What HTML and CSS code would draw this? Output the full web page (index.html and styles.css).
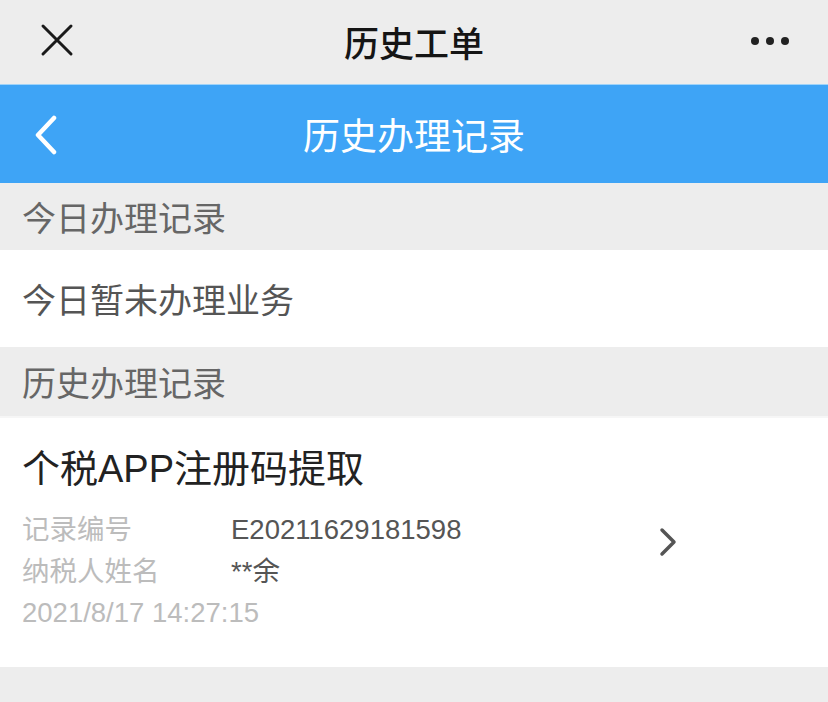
FILE: index.html
```html
<!DOCTYPE html>
<html lang="zh">
<head>
<meta charset="utf-8">
<link rel="stylesheet" href="styles.css">
</head>
<body>
<div class="page">
  <header class="topbar">
    <svg class="close" width="34" height="34" viewBox="0 0 34 34"><path d="M3 3 L31 31 M31 3 L3 31" stroke="#1a1a1a" stroke-width="3" fill="none" stroke-linecap="round"/></svg>
    <div class="toptitle">历史工单</div>
    <svg class="more" width="40" height="10" viewBox="0 0 40 10"><circle cx="5" cy="5" r="4" fill="#222"/><circle cx="20" cy="5" r="4" fill="#222"/><circle cx="35" cy="5" r="4" fill="#222"/></svg>
  </header>
  <nav class="bluebar">
    <svg class="back" width="26" height="40" viewBox="0 0 26 40"><path d="M21 3 L5 20 L21 37" stroke="#fff" stroke-width="4.5" fill="none" stroke-linecap="round" stroke-linejoin="round"/></svg>
    <div class="bluetitle">历史办理记录</div>
  </nav>
  <div class="section">今日办理记录</div>
  <div class="empty">今日暂未办理业务</div>
  <div class="section section-2">历史办理记录</div>
  <div class="card">
    <div class="card-body">
      <div class="card-title">个税APP注册码提取</div>
      <div class="meta">
        <div class="label">记录编号</div><div class="value">E20211629181598</div>
        <div class="label">纳税人姓名</div><div class="value">**余</div>
      </div>
      <div class="date">2021/8/17 14:27:15</div>
    </div>
    <svg class="chev" width="20" height="30" viewBox="0 0 20 30"><path d="M4 3 L16 15 L4 27" stroke="#555" stroke-width="3.5" fill="none" stroke-linecap="round" stroke-linejoin="round"/></svg>
  </div>
</div>
</body>
</html>
```
FILE: styles.css
```css
* { box-sizing: border-box; margin: 0; padding: 0; }
html, body { width: 828px; height: 702px; overflow: hidden; }
body {
  background: #ededed;
  font-family: "Liberation Sans", "Noto Sans CJK SC", sans-serif;
}
.page { display: flex; flex-direction: column; }
.topbar {
  height: 84px;
  background: #ededed;
  display: flex;
  align-items: center;
  justify-content: space-between;
  padding: 0 38px 0 40px;
  position: relative;
}
.toptitle {
  position: absolute;
  left: 0; right: 0;
  text-align: center;
  font-size: 35px;
  font-weight: 500;
  color: #151515;
  line-height: 82px;
  font-family: "Noto Sans CJK SC", sans-serif;
  pointer-events: none;
}
.close { margin-top: -4px; }
.more { margin-top: -2px; }
.bluebar {
  height: 99px;
  background: #3ea4f6;
  border-top: 1px solid #9fd3f9;
  display: flex;
  align-items: center;
  padding-left: 33px;
  position: relative;
}
.bluetitle {
  position: absolute;
  left: 0; right: 0;
  text-align: center;
  color: #fff;
  font-size: 37px;
  font-family: "Noto Sans CJK SC", sans-serif;
  font-weight: 400;
  line-height: 98px;
}
.back { margin-top: 2px; }
.section {
  height: 67px;
  background: #ededed;
  color: #666;
  font-size: 34px;
  padding-left: 22px;
  display: flex;
  align-items: center;
  font-family: "Noto Sans CJK SC", sans-serif;
}
.section-2 { height: 69px; }
.empty {
  height: 97px;
  background: #fff;
  color: #555;
  font-size: 34px;
  padding-left: 22px;
  display: flex;
  align-items: center;
  font-family: "Noto Sans CJK SC", sans-serif;
}
.card {
  height: 251px;
  background: #fff;
  display: flex;
  align-items: center;
  padding-left: 22px;
  border-top: 2px solid #f6f6f6;
}
.card-body { width: 636px; align-self: flex-start; padding-top: 28px; }
.card-title {
  font-size: 38px;
  color: #222;
  line-height: 46px;
  font-family: "Liberation Sans", "Noto Sans CJK SC", sans-serif;
}
.meta {
  display: grid;
  grid-template-columns: 209px auto;
  margin-top: 17px;
}
.label, .value, .date { font-size: 27.5px; line-height: 42px; }
.label { color: #bcbcbc; }
.value { color: #555; }
.date { color: #bcbcbc; margin-top: -1px; }
.chev { margin-top: -2px; }
```
